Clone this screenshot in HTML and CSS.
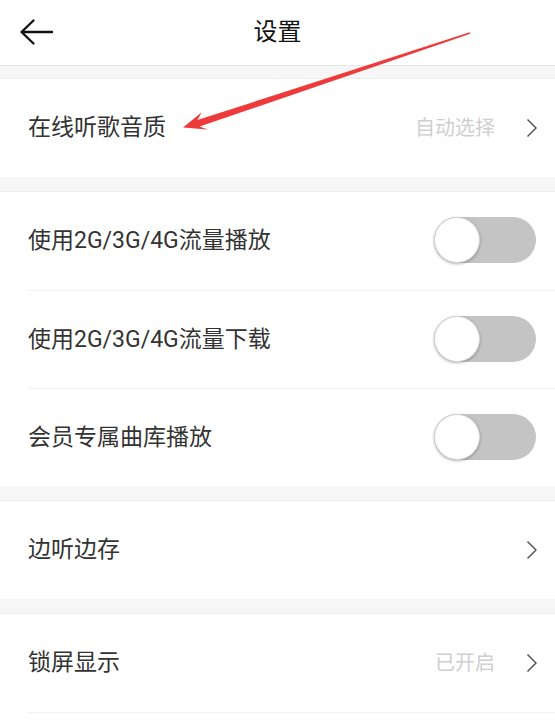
FILE: index.html
```html
<!DOCTYPE html>
<html lang="zh">
<head>
<meta charset="utf-8">
<title>设置</title>
<link rel="stylesheet" href="styles.css">
</head>
<body>
<div class="page">
  <header class="header">
    <svg class="back" width="36" height="30" viewBox="18 17 36 30">
      <path d="M52 32 H22 M33.5 20.5 L21.5 32 L33.5 43.5" fill="none" stroke="#111" stroke-width="2.4" stroke-linecap="round" stroke-linejoin="round"/>
    </svg>
    <h1 class="title">设置</h1>
    <span class="spacer"></span>
  </header>
  <div class="gap gap-first"></div>
  <section class="group">
    <div class="row">
      <span class="label">在线听歌音质</span>
      <span class="value">自动选择</span>
      <svg class="chev" width="11" height="20" viewBox="0 0 11 20"><polyline points="1.5,1.5 10,10 1.5,18.5" fill="none" stroke="#555" stroke-width="1.5"/></svg>
    </div>
  </section>
  <div class="gap"></div>
  <section class="group">
    <div class="row">
      <span class="label">使用2G/3G/4G流量播放</span>
      <span class="switch"><span class="knob"></span></span>
    </div>
    <div class="row">
      <span class="label">使用2G/3G/4G流量下载</span>
      <span class="switch"><span class="knob"></span></span>
    </div>
    <div class="row">
      <span class="label">会员专属曲库播放</span>
      <span class="switch"><span class="knob"></span></span>
    </div>
  </section>
  <div class="gap"></div>
  <section class="group">
    <div class="row">
      <span class="label">边听边存</span>
      <svg class="chev" width="11" height="20" viewBox="0 0 11 20"><polyline points="1.5,1.5 10,10 1.5,18.5" fill="none" stroke="#555" stroke-width="1.5"/></svg>
    </div>
  </section>
  <div class="gap"></div>
  <section class="group">
    <div class="row row-last">
      <span class="label">锁屏显示</span>
      <span class="value">已开启</span>
      <svg class="chev" width="11" height="20" viewBox="0 0 11 20"><polyline points="1.5,1.5 10,10 1.5,18.5" fill="none" stroke="#555" stroke-width="1.5"/></svg>
    </div>
  </section>
  <svg class="annot" width="555" height="725" viewBox="0 0 555 725">
    <polygon points="183,127.5 207.8,129.6 199.6,126.6 470.3,33.7 469.7,32.3 197.4,120 201.8,112.2" fill="#ee3a3a"/>
  </svg>
</div>
</body>
</html>
```
FILE: styles.css
```css
html, body {
  margin: 0;
  padding: 0;
  background: #ffffff;
}
body {
  font-family: Roboto, "Noto Sans CJK SC", "Noto Sans", sans-serif;
  color: #333333;
}
.page {
  position: relative;
  width: 555px;
  height: 725px;
  overflow: hidden;
  background: #ffffff;
}
.header {
  box-sizing: border-box;
  height: 66px;
  border-bottom: 1px solid #e6e6e6;
  display: flex;
  align-items: center;
  padding: 0 18px;
}
.back {
  display: block;
  width: 36px;
  height: 30px;
  margin-top: -1px;
}
.spacer {
  width: 36px;
}
.title {
  flex: 1;
  margin: 0;
  text-align: center;
  font-size: 24px;
  font-weight: 400;
  color: #111111;
  line-height: 1;
  margin-top: -2px;
}
.gap {
  box-sizing: border-box;
  height: 15px;
  background: #f6f6f6;
  border-bottom: 1px solid #ececec;
}
.gap-first {
  height: 13px;
}
.group {
  background: #ffffff;
}
.row {
  box-sizing: border-box;
  height: 98px;
  margin-left: 28px;
  padding-right: 18px;
  display: flex;
  align-items: center;
}
.row + .row {
  border-top: 1px solid #f1f1f1;
}
.row-last {
  height: 99px;
  border-bottom: 1px solid #f1f1f1;
}
.label {
  flex: 1;
  font-size: 23px;
  color: #333333;
  line-height: 1;
  margin-top: -1px;
}
.value {
  font-size: 20px;
  color: #cfcfcf;
  line-height: 1;
  margin-right: 31px;
}
.chev {
  display: block;
  margin-top: -1px;
}
.switch {
  box-sizing: border-box;
  width: 102px;
  height: 46px;
  border-radius: 23px;
  background: #c4c4c4;
  display: flex;
  align-items: center;
  margin-right: 1px;
  margin-top: -2px;
}
.knob {
  box-sizing: border-box;
  width: 46px;
  height: 46px;
  border-radius: 50%;
  background: #ffffff;
  border: 1px solid #d6d6d6;
  box-shadow: 0 1px 3px rgba(0, 0, 0, 0.3);
}
.annot {
  position: absolute;
  left: 0;
  top: 0;
  pointer-events: none;
}
```
